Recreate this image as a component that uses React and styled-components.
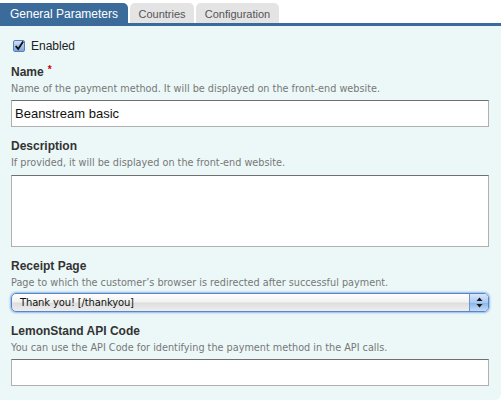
import React from "react"
import styled, { createGlobalStyle } from "styled-components"

const GlobalStyle = createGlobalStyle`
  html, body {
    margin: 0;
    padding: 0;
    background: #ffffff;
  }
  body {
    font-family: "Liberation Sans", Arial, sans-serif;
  }
`

const Page = styled.div`
  width: 501px;
  padding-top: 3px;
`

const TabBar = styled.div`
  display: flex;
  gap: 2px;
  height: 20px;
`

const Tab = styled.div`
  display: flex;
  align-items: center;
  justify-content: center;
  box-sizing: border-box;
  width: ${(p) => p.$width}px;
  height: 20px;
  border-radius: ${(p) => (p.$active ? "0 5px 0 0" : "5px 5px 0 0")};
  background: ${(p) => (p.$active ? "#3a6b9b" : "#e4e4e4")};
  color: ${(p) => (p.$active ? "#ffffff" : "#555555")};
  font-size: ${(p) => (p.$active ? "12px" : "11px")};
  padding-top: 1px;
`

const Panel = styled.div`
  border-top: 3px solid #3a6b9b;
  background: #ecf8f8;
  border-bottom-right-radius: 6px;
  padding: 10px 12px 14px 11px;
`

const CheckRow = styled.label`
  display: flex;
  align-items: center;
  height: 20px;
  gap: 6px;
  padding-left: 2px;
  font-size: 12px;
  color: #222;
`

const CheckBox = styled.span`
  width: 12px;
  height: 12px;
  box-sizing: border-box;
  border: 1px solid #5d7fb0;
  border-radius: 2px;
  background: linear-gradient(#cfe0f6, #7ba6de);
  display: flex;
  align-items: center;
  justify-content: center;
  svg {
    display: block;
  }
`

const Field = styled.div`
  margin-top: ${(p) => p.$top}px;
`

const Label = styled.div`
  font-size: 12px;
  font-weight: bold;
  line-height: 18px;
  color: #333;
`

const Required = styled.span`
  color: #cc0000;
  font-size: 10px;
  vertical-align: top;
  line-height: 14px;
  margin-left: 4px;
`

const Hint = styled.div`
  font-family: "DejaVu Sans", Verdana, sans-serif;
  font-size: 9.7px;
  line-height: 14px;
  padding-top: 1px;
  color: #777;
  margin-bottom: ${(p) => p.$gap}px;
`

const TextInput = styled.div`
  box-sizing: border-box;
  height: 27px;
  background: #fff;
  border: 1px solid #b0b0b0;
  border-top-color: #707070;
  font-size: 13px;
  color: #111;
  padding: 0 3px;
  display: flex;
  align-items: center;
`

const TextArea = styled(TextInput)`
  height: 72px;
`

const Select = styled.div`
  box-sizing: border-box;
  height: 19px;
  border: 1px solid #5a86c8;
  border-radius: 5px;
  box-shadow: 0 0 2px 1px #8fb6ea;
  background: linear-gradient(#ffffff 0%, #f2f2f2 45%, #dedede 55%, #eeeeee 100%);
  display: flex;
  align-items: center;
  overflow: hidden;
`

const SelectText = styled.div`
  flex: 1;
  padding-left: 8px;
  font-family: "DejaVu Sans", Verdana, sans-serif;
  font-size: 10px;
  letter-spacing: -0.15px;
  color: #111;
`

const SelectArrows = styled.div`
  width: 18px;
  height: 100%;
  border-left: 1px solid #6d93cc;
  background: linear-gradient(#d8e8fa 0%, #a9c9f0 50%, #8cb6ea 55%, #c4dcf8 100%);
  display: flex;
  align-items: center;
  justify-content: center;
`

const Check = () => (
  <svg width="12" height="12" viewBox="0 0 12 12">
    <path d="M2 6 L5 9.5 L11 0.5" fill="none" stroke="#111" strokeWidth="2.2" />
  </svg>
)

const Arrows = () => (
  <svg width="7" height="11" viewBox="0 0 7 11">
    <path d="M3.5 0.5 L6.5 4 L0.5 4 Z" fill="#1a1a1a" />
    <path d="M3.5 10.5 L6.5 7 L0.5 7 Z" fill="#1a1a1a" />
  </svg>
)

export default function App() {
  return (
    <>
      <GlobalStyle />
      <Page>
        <TabBar>
          <Tab $active $width={128}>General Parameters</Tab>
          <Tab $width={64}>Countries</Tab>
          <Tab $width={83}>Configuration</Tab>
        </TabBar>
        <Panel>
          <CheckRow>
            <CheckBox>
              <Check />
            </CheckBox>
            Enabled
          </CheckRow>
          <Field $top={7}>
            <Label>
              Name<Required>*</Required>
            </Label>
            <Hint $gap={4}>Name of the payment method. It will be displayed on the front-end website.</Hint>
            <TextInput>Beanstream basic</TextInput>
          </Field>
          <Field $top={10}>
            <Label>Description</Label>
            <Hint $gap={5}>If provided, it will be displayed on the front-end website.</Hint>
            <TextArea />
          </Field>
          <Field $top={10}>
            <Label>Receipt Page</Label>
            <Hint $gap={3}>Page to which the customer’s browser is redirected after successful payment.</Hint>
            <Select>
              <SelectText>Thank you! [/thankyou]</SelectText>
              <SelectArrows>
                <Arrows />
              </SelectArrows>
            </Select>
          </Field>
          <Field $top={10}>
            <Label>LemonStand API Code</Label>
            <Hint $gap={4}>You can use the API Code for identifying the payment method in the API calls.</Hint>
            <TextInput />
          </Field>
        </Panel>
      </Page>
    </>
  )
}
